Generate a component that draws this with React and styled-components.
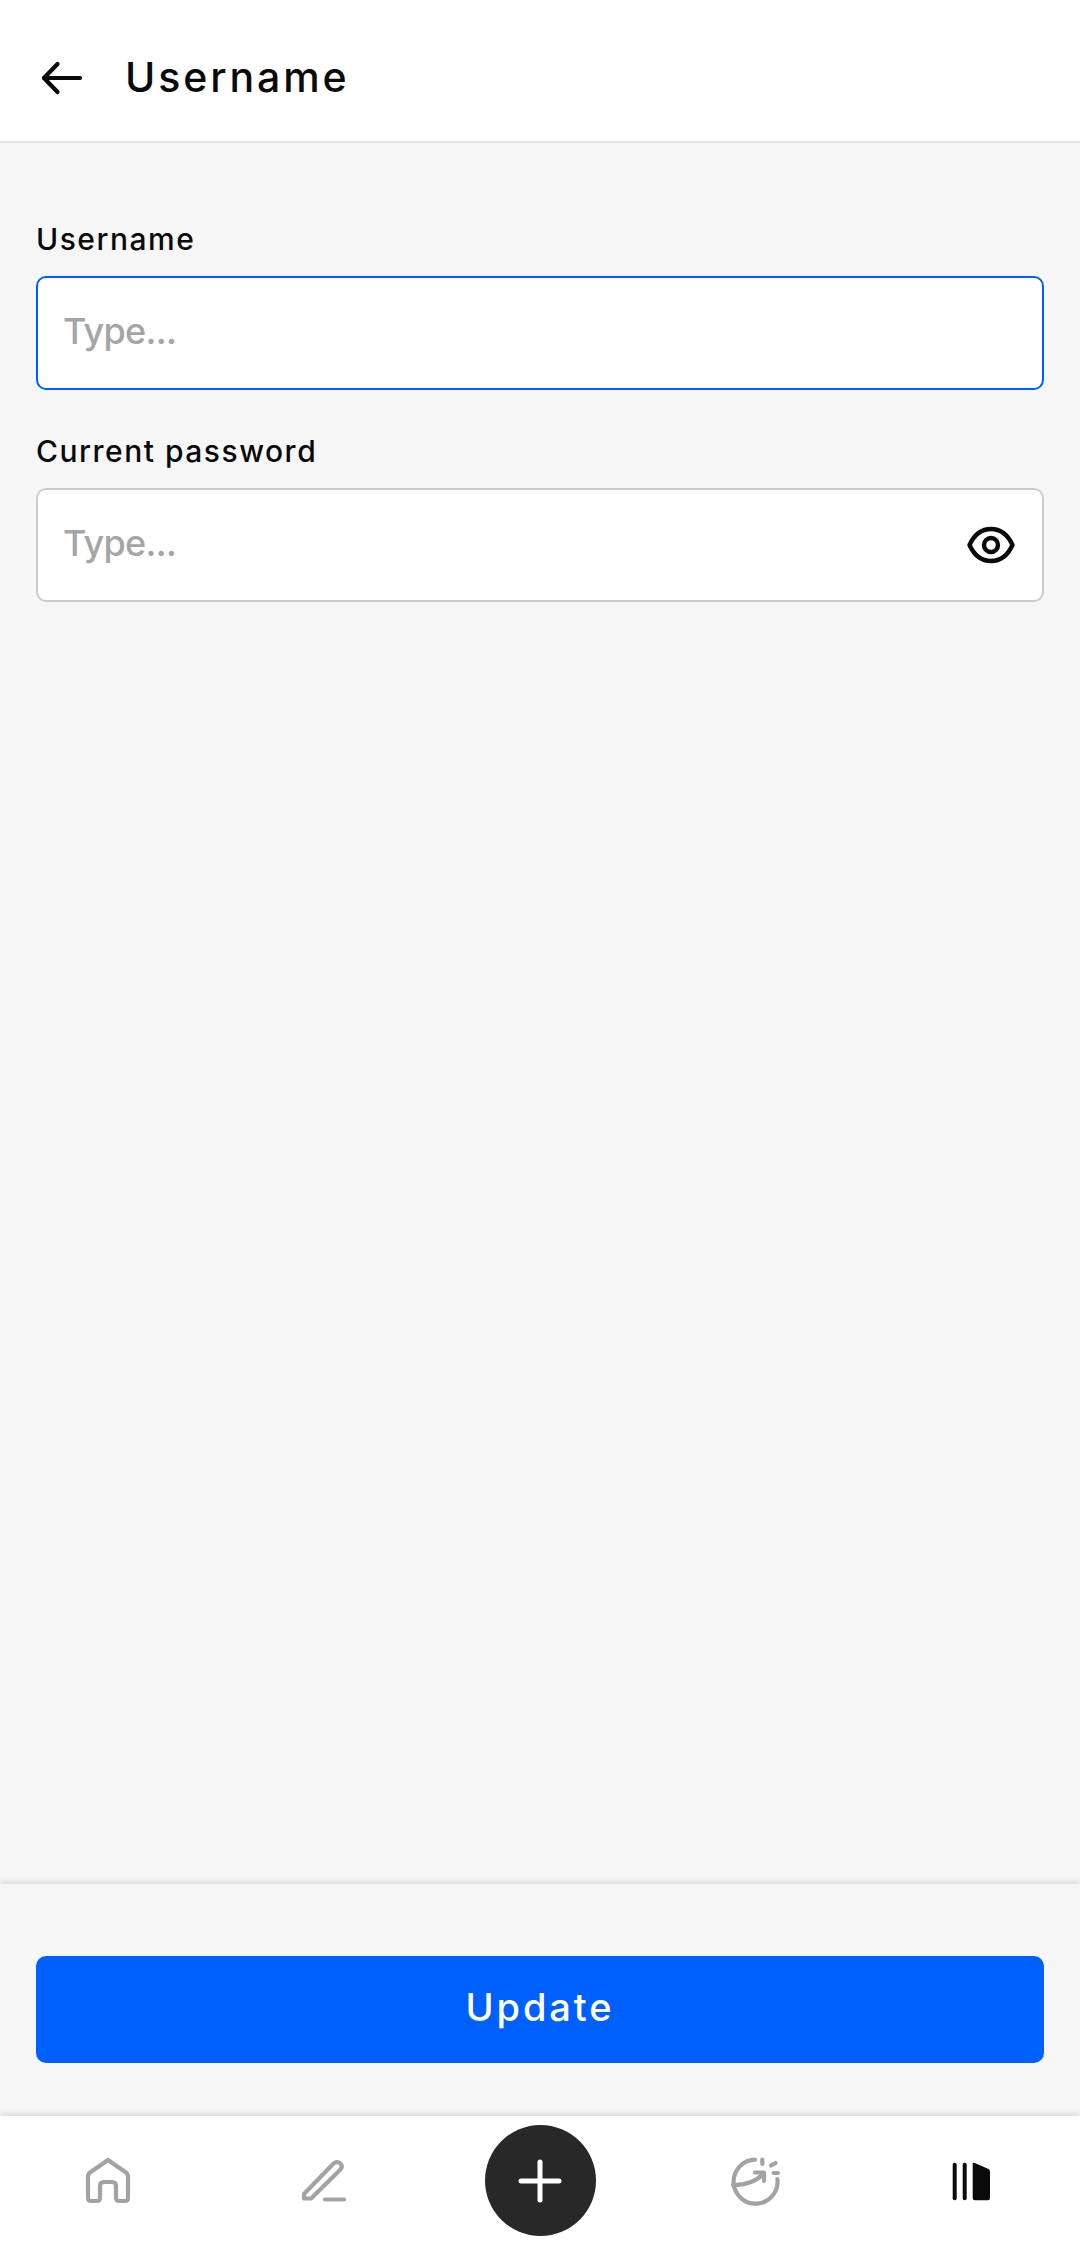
import styled, { createGlobalStyle } from "styled-components"

const GlobalStyle = createGlobalStyle`
* { box-sizing: border-box; }
html, body { margin: 0; padding: 0; background: #F6F6F7; }
body { font-family: "Inter", "Noto Sans", sans-serif; color: #0A0A0A; }
`

function BackIcon() {
    return (
        <svg width="48" height="48" viewBox="0 0 48 48" fill="none" stroke="#0A0A0A" strokeWidth="4.2" strokeLinecap="round" strokeLinejoin="round">
            <path d="M6 24H42" />
            <path d="M19.5 10L6 24L19.5 38" />
        </svg>
    )
}

function EyeIcon() {
    return (
        <svg width="48" height="48" viewBox="0 0 48 48" fill="none" stroke="#0A0A0A" strokeWidth="4.4" strokeLinejoin="round">
            <path d="M2.5 24C8 12 15 8 24 8C33 8 40 12 45.5 24C40 36 33 40 24 40C15 40 8 36 2.5 24Z" />
            <circle cx="24" cy="24" r="7" />
        </svg>
    )
}

function HomeIcon() {
    return (
        <svg width="48" height="48" viewBox="0 0 48 48" fill="none" stroke="#A3A3A3" strokeWidth="4.2" strokeLinejoin="round">
            <path d="M24 3L6 15.5Q4 17 4 20V41Q4 44 7 44H13Q16 44 16 41V29Q16 25 20 25H28Q32 25 32 29V41Q32 44 35 44H41Q44 44 44 41V20Q44 17 42 15.5Z" />
        </svg>
    )
}

function PencilIcon() {
    return (
        <svg width="48" height="48" viewBox="0 0 48 48" fill="none" stroke="#A3A3A3" strokeWidth="4.2" strokeLinecap="round" strokeLinejoin="round">
            <path d="M4 37L33 7Q37 3.5 40.5 6.5Q43.5 10 40 13L11 41.5H4Z" />
            <path d="M25 42.5H44" />
        </svg>
    )
}

function PlusIcon() {
    return (
        <svg width="48" height="48" viewBox="0 0 48 48" fill="none" stroke="#FFFFFF" strokeWidth="5" strokeLinecap="round">
            <path d="M24 5V43" />
            <path d="M5 24H43" />
        </svg>
    )
}

function ChartIcon() {
    return (
        <svg width="52" height="52" viewBox="0 0 52 52" fill="none" stroke="#A3A3A3" strokeWidth="4.2" strokeLinecap="round" strokeLinejoin="round">
            <path d="M25 4.7A22 22 0 1 0 47.4 24" />
            <path d="M3 30C14 30 26 27 33 19" />
            <path d="M25 17.5H34V26" />
            <path d="M32.3 4.5V9" />
            <path d="M41 10.5L45.5 8" />
            <path d="M43.5 18H48" />
        </svg>
    )
}

function LibraryIcon() {
    return (
        <svg width="48" height="48" viewBox="0 0 48 48" fill="#0A0A0A">
            <rect x="4.7" y="5.7" width="4" height="37.6" rx="2" />
            <rect x="14.7" y="5.7" width="4" height="37.6" rx="2" />
            <path d="M24.7 7Q24.7 5.2 26.2 5.8L40.5 12Q42 13 42 15V41Q42 43.3 40 43.3H27Q24.7 43.3 24.7 41Z" />
        </svg>
    )
}

function Campo({ label, focado, children }) {
    return (
        <Grupo>
            <Rotulo>{label}</Rotulo>
            <CaixaInput $focado={focado}>
                <Entrada placeholder="Type..." />
                {children}
            </CaixaInput>
        </Grupo>
    )
}

export default function App() {
    return (
        <>
            <GlobalStyle />
            <Pagina>
                <Topo>
                    <BotaoVoltar><BackIcon /></BotaoVoltar>
                    <Titulo>Username</Titulo>
                </Topo>
                <Formulario>
                    <Campo label="Username" focado />
                    <Campo label="Current password">
                        <BotaoOlho><EyeIcon /></BotaoOlho>
                    </Campo>
                </Formulario>
                <Rodape>
                    <BotaoAtualizar>Update</BotaoAtualizar>
                </Rodape>
                <Navegacao>
                    <ItemNav><HomeIcon /></ItemNav>
                    <ItemNav><PencilIcon /></ItemNav>
                    <ItemNav><BotaoMais><PlusIcon /></BotaoMais></ItemNav>
                    <ItemNav><ChartIcon /></ItemNav>
                    <ItemNav><LibraryIcon /></ItemNav>
                </Navegacao>
            </Pagina>
        </>
    )
}

const Pagina = styled.div`
    display: flex;
    flex-direction: column;
    width: 1080px;
    height: 2255px;
    background: #F6F6F7;
    overflow: hidden;
`
const Topo = styled.header`
    display: flex;
    align-items: center;
    flex: 0 0 143px;
    padding: 14px 0 0 38px;
    gap: 40px;
    background: #FFFFFF;
    border-bottom: 2px solid #E6E6E6;
`
const BotaoVoltar = styled.div`
    display: flex;
    width: 48px;
    height: 48px;
`
const Titulo = styled.h1`
    margin: -2px 0 0 -1px;
    font-size: 41px;
    line-height: 50px;
    font-weight: 450;
    letter-spacing: 2.9px;
`
const Formulario = styled.main`
    flex: 1;
    display: flex;
    flex-direction: column;
    gap: 43px;
    padding: 78px 36px 0;
`
const Grupo = styled.div`
    display: flex;
    flex-direction: column;
    gap: 19px;
`
const Rotulo = styled.label`
    font-size: 30px;
    line-height: 36px;
    font-weight: 500;
    letter-spacing: 1.5px;
`
const CaixaInput = styled.div`
    display: flex;
    align-items: center;
    height: 114px;
    padding: 0 26px 0 25px;
    background: #FFFFFF;
    border: 2px solid ${(p) => (p.$focado ? "#0060FF" : "#CCCCCC")};
    border-radius: 10px;
`
const Entrada = styled.input`
    flex: 1;
    min-width: 0;
    border: none;
    outline: none;
    padding: 0 0 4px;
    background: transparent;
    font-family: inherit;
    font-size: 36px;
    font-weight: 450;
    letter-spacing: -0.7px;
    &::placeholder {
        color: #A5A5A5;
        opacity: 1;
    }
`
const BotaoOlho = styled.div`
    display: flex;
    width: 48px;
    height: 48px;
    margin-right: 1px;
`
const Rodape = styled.section`
    flex: 0 0 232px;
    padding: 72px 36px 0;
    background: #F6F6F7;
    box-shadow: 0 -2px 6px rgba(0, 0, 0, 0.13);
`
const BotaoAtualizar = styled.button`
    display: block;
    width: 100%;
    height: 107px;
    padding: 0 0 6px;
    border: none;
    border-radius: 10px;
    background: #0060FF;
    color: #FFFFFF;
    font-family: inherit;
    font-size: 38px;
    font-weight: 500;
    letter-spacing: 2.9px;
`
const Navegacao = styled.nav`
    position: relative;
    display: grid;
    grid-template-columns: repeat(5, 216px);
    flex: 0 0 139px;
    background: #FFFFFF;
    box-shadow: 0 -2px 6px rgba(0, 0, 0, 0.13);
`
const ItemNav = styled.div`
    display: flex;
    align-items: center;
    justify-content: center;
    margin-bottom: 10px;
`
const BotaoMais = styled.div`
    display: flex;
    align-items: center;
    justify-content: center;
    width: 111px;
    height: 111px;
    border-radius: 50%;
    background: #282828;
`
